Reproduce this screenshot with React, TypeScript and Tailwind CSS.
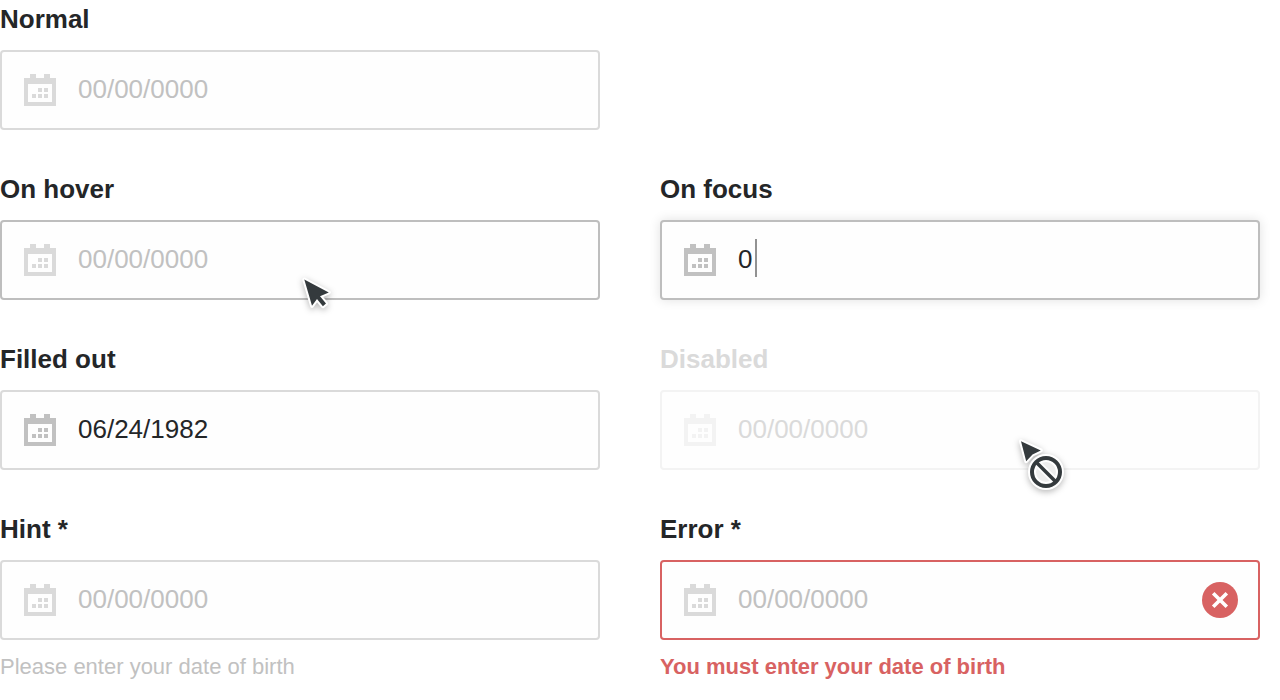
import React, { useId } from "react";

type FieldState = "normal" | "hover" | "focus" | "filled" | "disabled" | "error";

const boxStyles: Record<FieldState, string> = {
  normal: "border-[#dadada]",
  hover: "border-[#bebebe]",
  focus: "border-[#bebebe] shadow-[0_0_12px_rgba(0,0,0,0.12)]",
  filled: "border-[#dadada]",
  disabled: "border-[#f3f3f3]",
  error: "border-[#d86262]",
};

const iconStyles: Record<FieldState, string> = {
  normal: "text-[#dadada]",
  hover: "text-[#dadada]",
  focus: "text-[#c1c1c1]",
  filled: "text-[#c1c1c1]",
  disabled: "text-[#f3f3f3]",
  error: "text-[#dadada]",
};

function CalendarIcon({ className }: { className: string }) {
  return (
    <svg viewBox="0 0 32 32" className={`size-8 shrink-0 ${className}`} fill="currentColor" shapeRendering="crispEdges" aria-hidden="true">
      <path fillRule="evenodd" d="M6 0h6v4h8V0h6v4h6v28H0V4h6zM4 10v18h24V10z" />
      <path d="M14 14h4v4h-4zM20 14h4v4h-4zM8 20h4v4H8zM14 20h4v4h-4zM20 20h4v4h-4z" />
    </svg>
  );
}

function ErrorIcon() {
  return (
    <svg viewBox="0 0 36 36" className="size-9 shrink-0" aria-hidden="true">
      <circle cx="18" cy="18" r="18" fill="#d86262" />
      <path d="M11.2 11.2l13.6 13.6M24.8 11.2L11.2 24.8" stroke="#fff" strokeWidth="3.6" fill="none" />
    </svg>
  );
}

function ArrowCursor() {
  return (
    <svg
      viewBox="0 0 40 40"
      className="pointer-events-none absolute top-[52px] left-[298px] size-10 drop-shadow-[0_2px_3px_rgba(0,0,0,0.28)]"
      aria-hidden="true"
    >
      <path
        d="M4.3 5.6L28.8 18.4L20 22.2L26 29.6L22.9 32.2L17 25L12 31.8Z"
        fill="#343a3d"
        stroke="#fff"
        strokeWidth="4"
        strokeLinejoin="round"
        paintOrder="stroke"
      />
    </svg>
  );
}

function BlockedCursor() {
  return (
    <svg
      viewBox="0 0 60 60"
      className="pointer-events-none absolute top-[42px] left-[350px] size-[60px] drop-shadow-[0_2px_3px_rgba(0,0,0,0.28)]"
      aria-hidden="true"
    >
      <path d="M9 7.2L28.8 16.4L20.5 20.5L14.2 27.2Z" fill="#343a3d" stroke="#fff" strokeWidth="4" strokeLinejoin="round" paintOrder="stroke" />
      <circle cx="34" cy="38" r="14" fill="#ededed" stroke="#fff" strokeWidth="8" />
      <path d="M24 28l20 20" stroke="#fff" strokeWidth="7" />
      <circle cx="34" cy="38" r="14" fill="none" stroke="#343a3d" strokeWidth="4" />
      <path d="M24 28l20 20" stroke="#343a3d" strokeWidth="3.6" />
    </svg>
  );
}

type DateFieldProps = {
  label: string;
  state?: FieldState;
  value?: string;
  message?: string;
  className?: string;
  children?: React.ReactNode;
};

function DateField({ label, state = "normal", value, message, className = "", children }: DateFieldProps) {
  const id = useId();
  const disabled = state === "disabled";
  const invalid = state === "error";
  return (
    <div className={`min-w-0 ${className}`}>
      <label htmlFor={id} className={`mb-3 block text-[26px] leading-[38px] font-bold ${disabled ? "text-[#dadada]" : "text-[#242628]"}`}>
        {label}
      </label>
      <div className={`relative flex h-20 items-center gap-[22px] rounded-[4px] border-2 bg-[#fefefe] pr-5 pl-[22px] ${boxStyles[state]}`}>
        <CalendarIcon className={iconStyles[state]} />
        <input
          id={id}
          type="text"
          inputMode="numeric"
          placeholder="00/00/0000"
          defaultValue={value}
          disabled={disabled}
          aria-invalid={invalid}
          aria-describedby={message ? `${id}-message` : undefined}
          className={`h-full w-full min-w-0 bg-transparent pb-px text-[26px] text-[#242628] outline-none ${
            disabled ? "placeholder:text-[#dadada]" : "placeholder:text-[#c1c1c1]"
          }`}
        />
        {state === "focus" && <span className="absolute top-[17px] left-[93px] h-[38px] w-[2px] bg-[#929292]" />}
        {invalid && <ErrorIcon />}
        {children}
      </div>
      {message && (
        <p id={`${id}-message`} className={`mt-3 text-[22px] leading-[30px] ${invalid ? "font-bold text-[#d86262]" : "text-[#c1c1c1]"}`}>
          {message}
        </p>
      )}
    </div>
  );
}

export default function App() {
  return (
    <main className="bg-white pr-5 font-['Liberation_Sans',Arial,sans-serif]">
      <form className="grid grid-cols-2 gap-x-[60px] gap-y-10">
        <DateField label="Normal" />
        <DateField label="On hover" state="hover" className="col-start-1">
          <ArrowCursor />
        </DateField>
        <DateField label="On focus" state="focus" value="0" />
        <DateField label="Filled out" state="filled" value="06/24/1982" />
        <DateField label="Disabled" state="disabled">
          <BlockedCursor />
        </DateField>
        <DateField label="Hint *" message="Please enter your date of birth" />
        <DateField label="Error *" state="error" message="You must enter your date of birth" />
      </form>
    </main>
  );
}
